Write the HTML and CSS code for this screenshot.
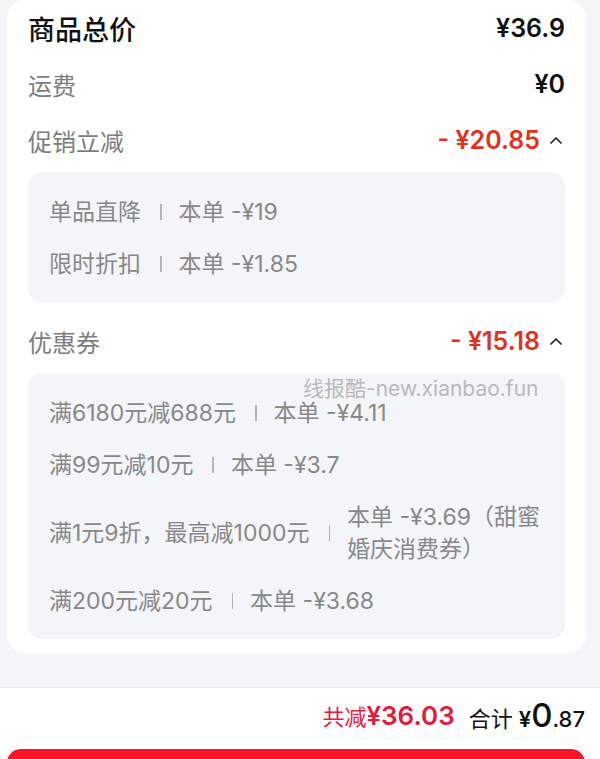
FILE: index.html
```html
<!DOCTYPE html>
<html lang="zh-CN">
<head>
<meta charset="utf-8">
<link rel="stylesheet" href="styles.css">
</head>
<body>
<div class="page">
  <div class="card">
    <div class="row">
      <span class="title">商品总价</span>
      <span class="amount">¥36.9</span>
    </div>
    <div class="row">
      <span class="label">运费</span>
      <span class="amount">¥0</span>
    </div>
    <div class="row">
      <span class="label">促销立减</span>
      <span class="amount-wrap"><span class="amount red">- ¥20.85</span><svg class="caret" viewBox="0 0 14 10" width="14" height="10"><path d="M2 8 L7 3 L12 8" fill="none" stroke="#222" stroke-width="1.7" stroke-linecap="round" stroke-linejoin="round"/></svg></span>
    </div>
    <div class="box box1">
      <div class="item"><span class="ilabel">单品直降</span><span class="sep"></span><span class="ival">本单 -¥19</span></div>
      <div class="item"><span class="ilabel">限时折扣</span><span class="sep"></span><span class="ival">本单 -¥1.85</span></div>
    </div>
    <div class="row row-coupon">
      <span class="label">优惠券</span>
      <span class="amount-wrap"><span class="amount red">- ¥15.18</span><svg class="caret" viewBox="0 0 14 10" width="14" height="10"><path d="M2 8 L7 3 L12 8" fill="none" stroke="#222" stroke-width="1.7" stroke-linecap="round" stroke-linejoin="round"/></svg></span>
    </div>
    <div class="box box2">
      <div class="watermark">线报酷-new.xianbao.fun</div>
      <div class="item"><span class="ilabel">满6180元减688元</span><span class="sep"></span><span class="ival">本单 -¥4.11</span></div>
      <div class="item"><span class="ilabel">满99元减10元</span><span class="sep"></span><span class="ival">本单 -¥3.7</span></div>
      <div class="item"><span class="ilabel">满1元9折，最高减1000元</span><span class="sep"></span><span class="ival">本单 -¥3.69（甜蜜婚庆消费券）</span></div>
      <div class="item"><span class="ilabel">满200元减20元</span><span class="sep"></span><span class="ival">本单 -¥3.68</span></div>
    </div>
  </div>
  <div class="footer">
    <div class="totals">
      <span class="saved">共减<b class="saved-num">¥36.03</b></span>
      <span class="total">合计 <b class="yen">¥</b><b class="big">0</b><b class="small">.87</b></span>
    </div>
    <div class="button"></div>
  </div>
</div>
</body>
</html>
```

FILE: styles.css
```css
* { box-sizing: border-box; margin: 0; padding: 0; }
html, body { height: 100%; }
body {
  background: #f4f5f9;
  font-family: "Inter", "Noto Sans CJK SC", sans-serif;
  overflow: hidden;
}
.page {
  width: 600px;
  height: 759px;
  display: flex;
  flex-direction: column;
}
.card {
  margin: 0 14px 0 7px;
  background: #fff;
  border-radius: 18px;
  padding: 0 21px 14px;
}
.row {
  height: 56px;
  display: flex;
  align-items: center;
  justify-content: space-between;
}
.row-coupon { margin-top: 11px; }
.title {
  font-size: 27px;
  font-weight: 500;
  color: #111;
}
.label {
  font-size: 24px;
  color: #7d7d7d;
}
.amount {
  font-size: 25px;
  font-weight: 600;
  color: #111;
}
.amount.red { color: #e5301d; }
.amount-wrap {
  display: flex;
  align-items: center;
  gap: 9px;
}
.caret { display: block; margin-right: 2px; }
.box {
  position: relative;
  margin-top: 4px;
  background: #f4f5f9;
  border-radius: 14px;
  padding: 24px 16px 22px 21px;
  display: flex;
  flex-direction: column;
  gap: 20px;
}
.item {
  display: flex;
  align-items: center;
  font-size: 23px;
  line-height: 32px;
  color: #888;
}
.ilabel { white-space: nowrap; }
.sep {
  flex: none;
  width: 1.5px;
  height: 16px;
  background: #b5b5b5;
  margin: 0 17px 0 19px;
}
.ival { flex: 1; min-width: 0; }
.watermark {
  position: absolute;
  left: 275px;
  top: 4px;
  font-size: 21px;
  line-height: 24px;
  color: #b9b9b9;
  white-space: nowrap;
}
.footer {
  margin-top: 34px;
  flex: 1;
  background: #fff;
  border-top: 1px solid #ececf0;
  display: flex;
  flex-direction: column;
}
.totals {
  height: 53px;
  display: flex;
  align-items: center;
  justify-content: flex-end;
  gap: 14px;
  padding-right: 15px;
}
.saved {
  font-size: 22px;
  color: #e41b3a;
}
.saved-num {
  font-size: 26px;
  font-weight: 600;
}
.total {
  font-size: 22px;
  color: #111;
  display: flex;
  align-items: baseline;
}
.total .yen { font-size: 22px; font-weight: 600; margin-left: 6px; }
.total .big { font-size: 33px; font-weight: 500; }
.total .small { font-size: 22px; font-weight: 500; }
.button {
  margin: 8px 15px 0 7px;
  height: 40px;
  background: #fa1428;
  border-radius: 14px;
}
```
